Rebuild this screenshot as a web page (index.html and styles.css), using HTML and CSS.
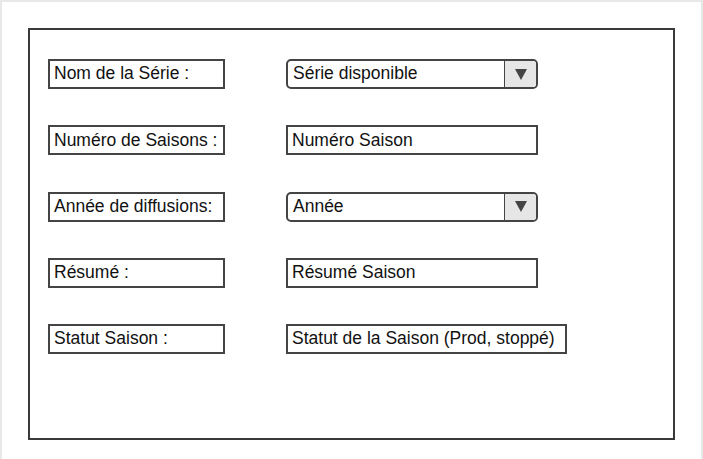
FILE: index.html
```html
<!DOCTYPE html>
<html lang="fr">
<head>
<meta charset="utf-8">
<link rel="stylesheet" href="styles.css">
</head>
<body>
<div class="page">
  <div class="frame">
    <div class="form">
      <div class="label">Nom de la Série :</div>
      <div class="field select"><span class="value">Série disponible</span><span class="arrow"></span></div>

      <div class="label">Numéro de Saisons :</div>
      <div class="field"><span class="value">Numéro Saison</span></div>

      <div class="label">Année de diffusions:</div>
      <div class="field select"><span class="value">Année</span><span class="arrow"></span></div>

      <div class="label">Résumé :</div>
      <div class="field"><span class="value">Résumé Saison</span></div>

      <div class="label">Statut Saison :</div>
      <div class="field wide"><span class="value">Statut de la Saison (Prod, stoppé)</span></div>
    </div>
  </div>
</div>
</body>
</html>
```

FILE: styles.css
```css
html, body {
  margin: 0;
  padding: 0;
}
body {
  background: #e8e8e8;
  font-family: "Liberation Sans", Arial, sans-serif;
  color: #111;
}
.page {
  margin: 2px 2px 0 2px;
  height: 457px;
  background: #fff;
  padding: 26px 0 0 26px;
  box-sizing: border-box;
}
.frame {
  width: 647px;
  height: 412px;
  box-sizing: border-box;
  border: 2px solid #3a3a3a;
  padding: 29px 0 0 18px;
}
.form {
  display: grid;
  grid-template-columns: 177px auto;
  grid-auto-rows: 30px;
  column-gap: 61px;
  row-gap: 36.25px;
  justify-items: start;
}
.label, .field {
  box-sizing: border-box;
  height: 30px;
  border: 2px solid #444;
  display: flex;
  align-items: center;
  font-size: 17.5px;
  line-height: 1;
  white-space: nowrap;
}
.label {
  width: 177px;
  padding-left: 4px;
}
.field {
  width: 252px;
  padding-left: 4px;
}
.field.wide {
  width: 281px;
}
.select {
  border-radius: 5px;
  padding-left: 0;
  overflow: hidden;
}
.select .value {
  flex: 1;
  padding-left: 5px;
}
.arrow {
  width: 31px;
  height: 100%;
  background: #e6e6e6;
  border-left: 1px solid #444;
  display: flex;
  align-items: center;
  justify-content: center;
}
.arrow::before {
  content: "";
  width: 0;
  height: 0;
  border-left: 6px solid transparent;
  border-right: 6px solid transparent;
  border-top: 11px solid #444;
}
```
